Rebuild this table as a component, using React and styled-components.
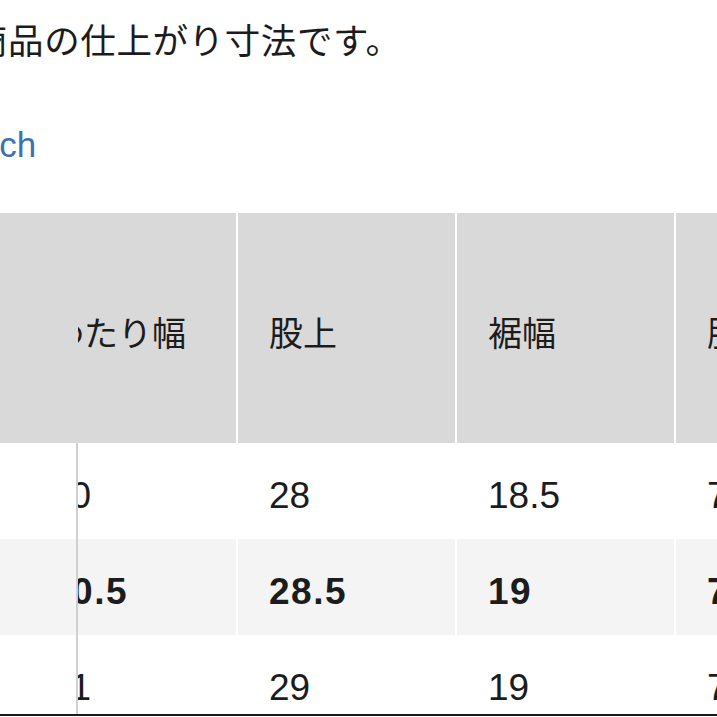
import React, { useLayoutEffect, useRef } from 'react';
import styled, { createGlobalStyle } from 'styled-components';

// Ukuran di halaman asli (tabel digeser ke kanan)
const SCROLL_X = 499;

const GlobalStyle = createGlobalStyle`
  html, body {
    margin: 0;
    padding: 0;
    height: 100%;
    overflow: hidden;
    background: #ffffff;
  }
  #root { height: 100%; }
`;

const Page = styled.div`
  display: flex;
  flex-direction: column;
  height: 100%;
  width: calc(100% + 28px);
  margin-left: -28px; /* halaman terpotong di sisi kiri */
  padding-top: 13px;
  box-sizing: border-box;
  font-family: 'Liberation Sans', 'Noto Sans CJK JP', sans-serif;
  color: #1c1c1c;
`;

const Intro = styled.p`
  margin: 0;
  font-family: 'Noto Sans CJK JP', sans-serif;
  font-size: 35.5px;
  line-height: 52px;
  letter-spacing: 0.6px;
  white-space: nowrap;
`;

const UnitLink = styled.a`
  display: block;
  margin-top: 55px;
  font-size: 35px;
  line-height: 50px;
  color: #3d72b2;
  text-decoration: none;
`;

const TableArea = styled.div`
  flex: 1;
  min-height: 0;
  margin-top: 43px;
  margin-bottom: 1px;
  border-bottom: 2px solid #1a1a1a;
  overflow: hidden;
`;

const Scroller = styled.div`
  overflow-x: auto;
  scrollbar-width: none;
  &::-webkit-scrollbar { display: none; }
`;

const Row = styled.div`
  display: flex;
  gap: 2px;
  width: max-content;
  background: #ffffff;
`;

const StickyCell = styled.div`
  position: sticky;
  left: 0;
  z-index: 1;
  flex: 0 0 106px;
  box-sizing: border-box;
  height: ${(p) => (p.$head ? 230 : 96)}px;
  background: ${(p) => (p.$head ? '#d9d9d9' : p.$hl ? '#f4f4f4' : '#ffffff')};
  border-right: 2px solid ${(p) => (p.$head ? '#d9d9d9' : '#d0d0d0')};
`;

const HeadCell = styled.div`
  flex: 0 0 217px;
  height: 230px;
  box-sizing: border-box;
  display: flex;
  align-items: center;
  padding: 6px 0 0 31px;
  background: #d9d9d9;
  font-family: 'Noto Sans CJK JP', sans-serif;
  font-size: 34px;
  white-space: nowrap;
`;

const Cell = styled.div`
  flex: 0 0 217px;
  height: 96px;
  box-sizing: border-box;
  display: flex;
  align-items: center;
  padding: 10px 0 0 31px;
  background: ${(p) => (p.$hl ? '#f4f4f4' : '#ffffff')};
  font-size: 37px;
  font-weight: ${(p) => (p.$hl ? 700 : 400)};
  letter-spacing: ${(p) => (p.$hl ? '1.5px' : '0')};
`;

const columns = ['ウエスト', 'ヒップ', 'わたり幅', '股上', '裾幅', '股下'];

const rows = [
  { values: ['70', '94', '30', '28', '18.5', '76'] },
  { values: ['73', '97', '30.5', '28.5', '19', '76'], highlight: true },
  { values: ['76', '100', '31', '29', '19', '76'] },
];

const SizeTable = () => {
  const scrollRef = useRef(null);

  useLayoutEffect(() => {
    if (scrollRef.current) scrollRef.current.scrollLeft = SCROLL_X;
  }, []);

  return (
    <Scroller ref={scrollRef}>
      <Row>
        <StickyCell $head />
        {columns.map((c) => (
          <HeadCell key={c}>{c}</HeadCell>
        ))}
      </Row>
      {rows.map((r, i) => (
        <Row key={i}>
          <StickyCell $hl={r.highlight} />
          {r.values.map((v, j) => (
            <Cell key={j} $hl={r.highlight}>{v}</Cell>
          ))}
        </Row>
      ))}
    </Scroller>
  );
};

const App = () => (
  <>
    <GlobalStyle />
    <Page>
      <Intro>商品の仕上がり寸法です。</Intro>
      <UnitLink href="#">inch</UnitLink>
      <TableArea>
        <SizeTable />
      </TableArea>
    </Page>
  </>
);

export default App;
